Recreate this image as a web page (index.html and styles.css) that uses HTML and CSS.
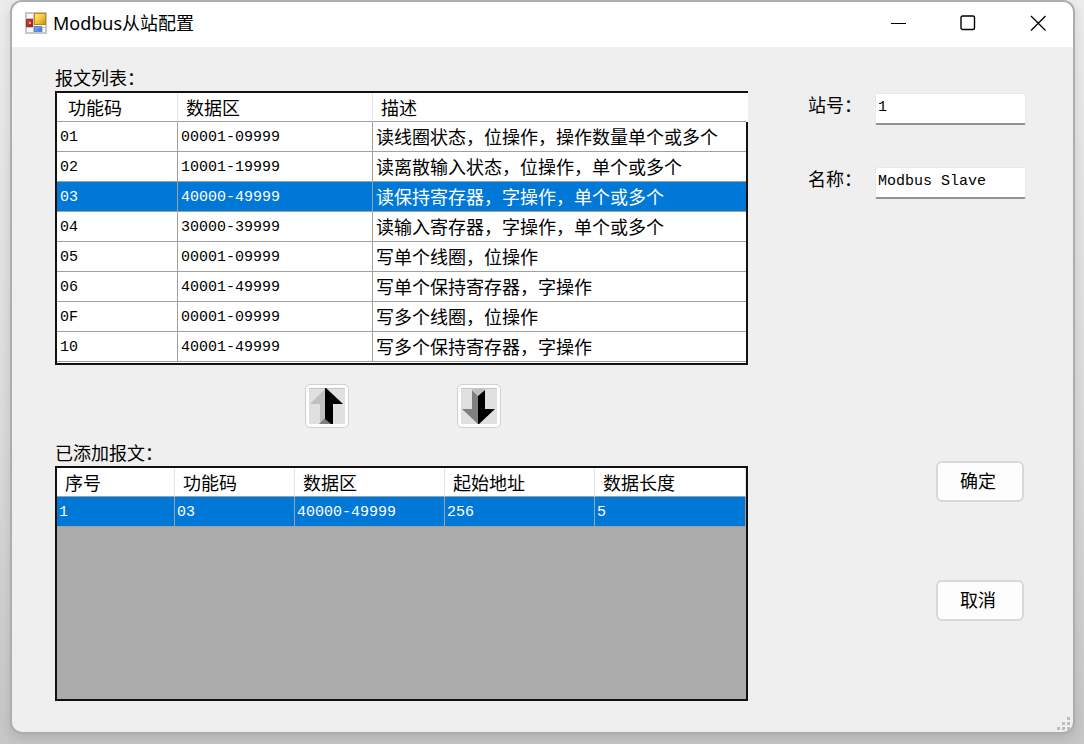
FILE: index.html
```html
<!DOCTYPE html>
<html lang="zh-CN">
<head>
<meta charset="utf-8">
<title>Modbus从站配置</title>
<link rel="stylesheet" href="styles.css">
</head>
<body>
<div class="window">
  <header class="titlebar">
    <svg class="app-icon" width="22" height="22" viewBox="0 0 22 22" aria-hidden="true">
      <defs>
        <linearGradient id="gold" x1="0" y1="0" x2="1" y2="1"><stop offset="0" stop-color="#ffe88a"/><stop offset=".5" stop-color="#f3c93c"/><stop offset="1" stop-color="#c99204"/></linearGradient>
        <linearGradient id="red" x1="0" y1="0" x2="1" y2="1"><stop offset="0" stop-color="#d8503c"/><stop offset="1" stop-color="#9c1410"/></linearGradient>
        <linearGradient id="blue" x1="0" y1="0" x2="1" y2="1"><stop offset="0" stop-color="#87b4f8"/><stop offset="1" stop-color="#356bd4"/></linearGradient>
      </defs>
      <rect x="1" y="1" width="20" height="20" fill="#fafafa" stroke="#c6c6c6" stroke-width="2"/>
      <path d="M8.500 1v20M1 6.500h8M1 15.500h20M17.500 15v6" stroke="#c6c6c6" fill="none"/>
      <rect x="9.500" y="1.500" width="11" height="11" fill="url(#gold)" stroke="#c08a10"/>
      <rect x="1.500" y="7.500" width="6" height="7" fill="url(#red)" stroke="#a52a20"/>
      <rect x="4" y="10" width="2" height="2" fill="#f0b0a8"/>
      <rect x="9.500" y="14.500" width="7" height="5" fill="url(#blue)" stroke="#5a86d8"/>
    </svg>
    <h1 class="title">Modbus从站配置</h1>
    <div class="window-controls">
      <button class="control" type="button" aria-label="最小化"><svg width="16" height="16" viewBox="0 0 16 16"><path d="M1 8.500h15" stroke="#000" fill="none"/></svg></button>
      <button class="control" type="button" aria-label="最大化"><svg width="16" height="16" viewBox="0 0 16 16"><rect x="1" y="1" width="13.500" height="13.500" rx="1.500" stroke="#000" stroke-width="1.400" fill="none"/></svg></button>
      <button class="control" type="button" aria-label="关闭"><svg width="16" height="16" viewBox="0 0 16 16"><path d="M1 1l14.500 14.500M15.500 1L1 15.500" stroke="#000" stroke-width="1.300" fill="none"/></svg></button>
    </div>
  </header>
  <main class="content">
    <section class="lists">
      <h2 class="label" id="available-label">报文列表：</h2>
      <div class="grid grid-available">
        <table class="table" aria-labelledby="available-label">
          <colgroup><col class="col-code"><col class="col-area"><col></colgroup>
          <thead><tr><th>功能码</th><th>数据区</th><th>描述</th></tr></thead>
          <tbody>
            <tr><td>01</td><td>00001-09999</td><td class="text">读线圈状态，位操作，操作数量单个或多个</td></tr>
            <tr><td>02</td><td>10001-19999</td><td class="text">读离散输入状态，位操作，单个或多个</td></tr>
            <tr class="selected"><td>03</td><td>40000-49999</td><td class="text">读保持寄存器，字操作，单个或多个</td></tr>
            <tr><td>04</td><td>30000-39999</td><td class="text">读输入寄存器，字操作，单个或多个</td></tr>
            <tr><td>05</td><td>00001-09999</td><td class="text">写单个线圈，位操作</td></tr>
            <tr><td>06</td><td>40001-49999</td><td class="text">写单个保持寄存器，字操作</td></tr>
            <tr><td>0F</td><td>00001-09999</td><td class="text">写多个线圈，位操作</td></tr>
            <tr><td>10</td><td>40001-49999</td><td class="text">写多个保持寄存器，字操作</td></tr>
          </tbody>
        </table>
      </div>
      <div class="move-buttons">
        <button class="move" type="button" aria-label="移除">
          <svg width="36" height="36" viewBox="0 0 36 36">
            <path fill="#e0e0e0" d="M0 0h36v36H0z"/><path fill="#c4c4c4" d="M0 0h36v1H0z"/>
            <path fill="#c0c0c0" d="M17 0L1 16h10v20h6z"/>
            <path fill="#808080" d="M16 30l-6 6h13z"/>
            <path fill="#000" d="M16 0h1l17 16H24v20h-2l-6-5z"/>
          </svg>
        </button>
        <button class="move" type="button" aria-label="添加">
          <svg width="36" height="36" viewBox="0 0 36 36">
            <path fill="#e0e0e0" d="M0 0h36v36H0z"/><path fill="#c4c4c4" d="M0 0h36v1H0z"/>
            <path fill="#c0c0c0" d="M11 1h13l-6 8z"/>
            <path fill="#808080" d="M11 2l6 6v28L1 21h10z"/>
            <path fill="#000" d="M24 2l-7 6v28h1l16-15H24z"/>
          </svg>
        </button>
      </div>
      <h2 class="label" id="added-label">已添加报文：</h2>
      <div class="grid grid-added">
        <table class="table" aria-labelledby="added-label">
          <colgroup><col class="col-index"><col class="col-code-added"><col class="col-wide"><col class="col-wide"><col></colgroup>
          <thead><tr><th>序号</th><th>功能码</th><th>数据区</th><th>起始地址</th><th>数据长度</th></tr></thead>
          <tbody><tr class="selected"><td>1</td><td>03</td><td>40000-49999</td><td>256</td><td>5</td></tr></tbody>
        </table>
      </div>
    </section>
    <form class="settings">
      <div class="field"><label for="station">站号：</label><input id="station" type="text" value="1"></div>
      <div class="field"><label for="name">名称：</label><input id="name" type="text" value="Modbus Slave"></div>
      <div class="actions">
        <button class="action" type="button">确定</button>
        <button class="action" type="button">取消</button>
      </div>
    </form>
  </main>
  <svg class="grip" width="14" height="14" viewBox="0 0 14 14" aria-hidden="true">
    <path fill="#bdbdbd" d="M10 0h3v3h-3zM5 5h3v3H5zM10 5h3v3h-3zM0 10h3v3H0zM5 10h3v3H5zM10 10h3v3h-3z"/>
  </svg>
</div>
</body>
</html>
```
FILE: styles.css
```css
* {
  box-sizing: border-box;
}

body {
  margin: 0;
  min-height: 100vh;
  padding: 0 9px 10px 10px;
  display: flex;
  background: linear-gradient(#ececec, #dadada 60%, #c6c6c6);
  color: #000;
  font-family: "Noto Sans CJK SC", sans-serif;
  font-size: 18px;
  line-height: 24px;
}

.window {
  position: relative;
  flex: 1;
  display: flex;
  flex-direction: column;
  border: 2px solid #adadad;
  border-radius: 12px;
  background: #efefef;
  box-shadow: 0 4px 12px rgba(0, 0, 0, 0.12);
  overflow: hidden;
}

.titlebar {
  display: flex;
  align-items: center;
  height: 45px;
  padding: 0 0 3px 13px;
  background: #fff;
}

.title {
  margin: 0 auto 0 6px;
  font: 400 18px/24px "Noto Sans", "Noto Sans CJK SC", sans-serif;
}

.window-controls {
  display: flex;
}

.control {
  display: flex;
  align-items: center;
  justify-content: center;
  width: 70px;
  height: 42px;
  padding: 0;
  border: 0;
  background: none;
}

.content {
  flex: 1;
  display: grid;
  grid-template-columns: 1fr 218px;
  gap: 60px;
  padding: 18px 47px 31px 43px;
}

.lists {
  display: flex;
  flex-direction: column;
}

.label {
  margin: 0;
  padding-bottom: 2px;
  font-size: 18px;
  font-weight: 400;
  line-height: 24px;
}

.grid {
  border: 2px solid #111;
}

.grid-available {
  padding-bottom: 1px;
  background: #fff;
}

.grid-added {
  flex: 1;
  background: #ababab;
}

.table {
  width: 100%;
  table-layout: fixed;
  border-collapse: separate;
  border-spacing: 0;
}

.col-code {
  width: 121px;
}

.col-area {
  width: 195px;
}

.col-index {
  width: 118px;
}

.col-code-added {
  width: 120px;
}

.col-wide {
  width: 150px;
}

.table th,
.table td {
  border-right: 1px solid #a0a0a0;
  border-bottom: 1px solid #a0a0a0;
  text-align: left;
  white-space: nowrap;
}

.table th {
  height: 29px;
  padding: 0 8px;
  border-right-color: #e5e5e5;
  background: #fff;
  font-weight: 400;
  line-height: 28px;
}

.table td {
  height: 30px;
  padding: 2px 3px 0;
  background: #fff;
  font-family: "Liberation Mono", "Noto Sans CJK SC", monospace;
  font-size: 15px;
  line-height: 27px;
}

.table td.text {
  padding-top: 0;
  font-family: "Noto Sans CJK SC", sans-serif;
  font-size: 18px;
  line-height: 29px;
}

.table .selected td {
  background: #0078d7;
  color: #fff;
}

.grid-available th:first-child {
  padding-left: 11px;
}

/* The header row runs over the frame on the right. */
.grid-available th:last-child {
  border-right: 0;
  box-shadow: 2px 0 #fff;
}

.grid-available td:last-child {
  border-right: 0;
}

.grid-added td {
  padding: 2px 2px 0;
}

.move-buttons {
  display: flex;
  justify-content: center;
  gap: 108px;
  padding: 19px 0 12px 2px;
}

.move {
  display: flex;
  align-items: center;
  justify-content: center;
  width: 44px;
  height: 44px;
  padding: 0;
  border: 1px solid #d0d0d0;
  border-radius: 5px;
  background: #fdfdfd;
}

.settings {
  display: flex;
  flex-direction: column;
  gap: 42px;
  padding-top: 28px;
}

.field {
  display: grid;
  grid-template-columns: 67px 1fr;
}

.field label {
  line-height: 22px;
}

.field input {
  width: 100%;
  min-width: 0;
  height: 32px;
  padding: 0 2px 3px;
  border: 1px solid #e8e8e8;
  border-bottom: 2px solid #929292;
  border-radius: 2px;
  background: #fff;
  color: #000;
  font: 15px "Liberation Mono", "Noto Sans CJK SC", monospace;
}

.actions {
  display: flex;
  flex-direction: column;
  align-items: flex-end;
  gap: 78px;
  padding: 220px 2px 0 0;
}

.action {
  width: 88px;
  height: 41px;
  padding: 0 4px 3px 0;
  border: 2px solid #d8d8d8;
  border-radius: 6px;
  background: #fdfdfd;
  color: #000;
  font: 18px/24px "Noto Sans CJK SC", sans-serif;
}

.grip {
  position: absolute;
  right: 2px;
  bottom: 1px;
}
```
